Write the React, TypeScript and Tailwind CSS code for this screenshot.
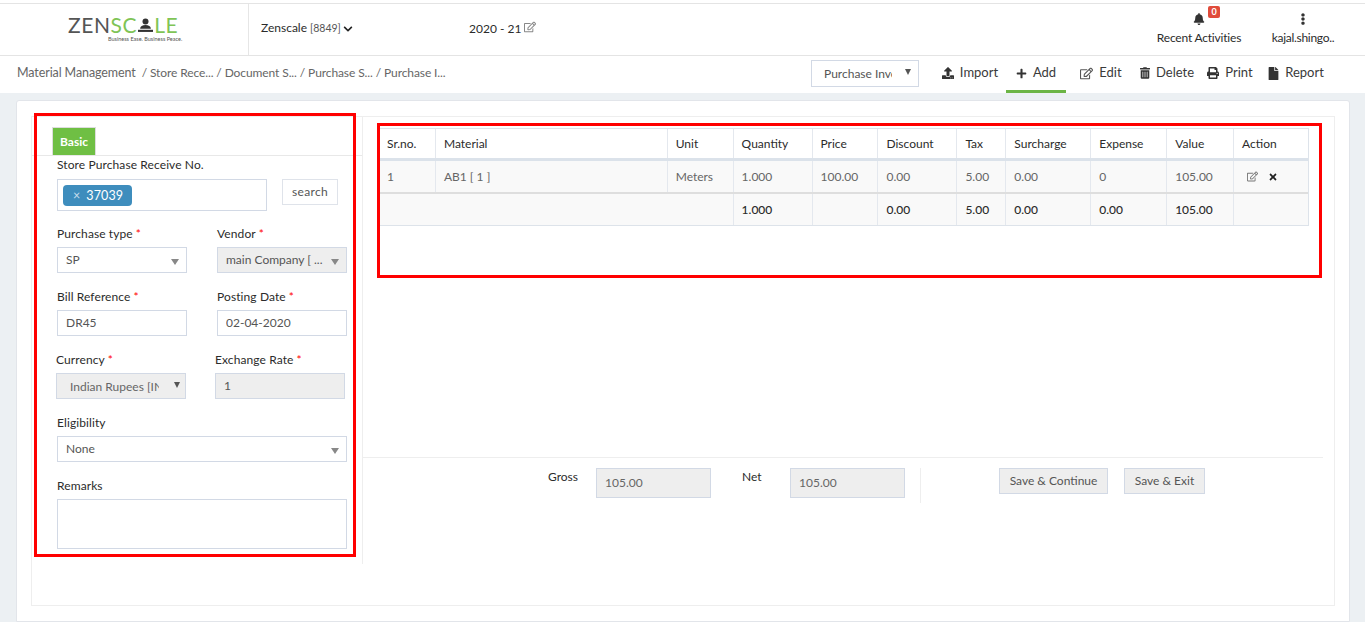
import { FaBell, FaChevronDown, FaEllipsisV, FaFile, FaPlus, FaPrint, FaRegEdit, FaTimes, FaTrashAlt, FaUpload } from "react-icons/fa";
import type { ReactNode } from "react";

const Req = () => <span className="text-[#ff0000] ml-[3px]">*</span>;

const Label = ({ children, req }: { children: ReactNode; req?: boolean }) => (
  <div className="text-[12px] leading-[16px] text-[#2b2b2b] tracking-[0.1px]">
    {children}
    {req && <Req />}
  </div>
);

const Caret = ({ dark }: { dark?: boolean }) => (
  dark
    ? <span className="w-0 h-0 border-x-[3px] border-x-transparent border-t-[6px] border-t-[#555]" />
    : <span className="w-0 h-0 border-x-[4px] border-x-transparent border-t-[6px] border-t-[#888]" />
);

const Field = ({ value, w = "w-[130px]", grey, caret }: { value: string; w?: string; grey?: boolean; caret?: boolean }) => (
  <div className={`${w} h-[26px] mt-[5px] border border-[#d2d9e5] flex items-center pl-[8px] pr-[7px] justify-between text-[12px] text-[#555] ${grey ? "bg-[#eeeeee]" : "bg-white"}`}>
    <span className="truncate">{value}</span>
    {caret && <span className="mt-[3px] flex shrink-0"><Caret /></span>}
  </div>
);

const cols = [
  { name: "Sr.no.", w: "w-[56px]" },
  { name: "Material", w: "w-[232px]" },
  { name: "Unit", w: "w-[66px]" },
  { name: "Quantity", w: "w-[79px]" },
  { name: "Price", w: "w-[66px]" },
  { name: "Discount", w: "w-[79px]" },
  { name: "Tax", w: "w-[49px]" },
  { name: "Surcharge", w: "w-[85px]" },
  { name: "Expense", w: "w-[76px]" },
  { name: "Value", w: "w-[67px]" },
  { name: "Action", w: "w-[74px]" },
];

const row = ["1", "AB1 [ 1 ]", "Meters", "1.000", "100.00", "0.00", "5.00", "0.00", "0", "105.00"];
const totals = ["", "", "", "1.000", "", "0.00", "5.00", "0.00", "0.00", "105.00", ""];

const Tool = ({ icon, label, active, w }: { icon: ReactNode; label: string; active?: boolean; w: string }) => (
  <div className={`${w} h-[37px] flex items-center justify-center gap-[6px] text-[13px] text-[#3a3a3a] border-b-[3px] ${active ? "border-[#6cb545]" : "border-transparent"}`}>
    {icon}
    <span>{label}</span>
  </div>
);

export default function App() {
  return (
    <div className="w-[1365px] h-[622px] overflow-hidden relative bg-white font-['Lato','Liberation_Sans',sans-serif]">
      {/* top bar */}
      <div className="mt-[3px] h-[53px] border-y border-[#e4e4e4] flex relative">
        <div className="w-[249px] border-r border-[#e6e6e6] flex flex-col pt-[11px] pl-[68px]">
          <div className="text-[21px] leading-[20px] tracking-[0.6px] text-[#555] flex items-center">
            ZEN<span className="text-[#7fc456]">SC</span>
            <svg width="15" height="15" viewBox="0 0 14 14" className="mx-[1px]">
              <circle cx="7" cy="3.2" r="2.8" fill="#333" />
              <path d="M2 10c0-2.2 2.2-3.4 5-3.4s5 1.2 5 3.4z" fill="#333" />
              <rect x="0" y="11" width="14" height="2" fill="#333" />
            </svg>
            <span className="text-[#7fc456]">LE</span>
          </div>
          <div className="text-[5.5px] leading-[6px] text-[#555] ml-[40px] mt-[1px] whitespace-nowrap">Business Ease. Business Peace.</div>
        </div>
        <div className="pl-[12px] pt-[15px] w-[220px] flex items-start gap-[3px] text-[12px] leading-[18px] text-[#2b2b2b]">
          Zenscale <span className="text-[10.5px] text-[#555]">[8849]</span>
          <FaChevronDown className="w-[10px] h-[10px] mt-[5px] -ml-[1px] text-[#222]" />
        </div>
        <div className="pt-[16px] flex items-start gap-[3px] text-[12px] leading-[18px] text-[#2b2b2b]">
          2020 - 21 <FaRegEdit className="w-[12px] h-[12px] mt-[1px] text-[#888]" />
        </div>
        <div className="ml-auto flex pr-[24px] text-[12px] text-[#2b2b2b]">
          <div className="w-[110px] flex flex-col items-center pt-[9px] relative">
            <FaBell className="w-[12px] h-[12px] text-[#333]" />
            <span className="absolute left-[64px] top-[2px] w-[12px] h-[12px] bg-[#e04b3a] rounded-[2px] text-white text-[9px] leading-[12px] font-bold text-center">0</span>
            <span className="mt-[5px] leading-[16px] tracking-[-0.2px]">Recent Activities</span>
          </div>
          <div className="ml-[11px] w-[76px] flex flex-col items-center pt-[9px]">
            <FaEllipsisV className="w-[12px] h-[12px] text-[#333]" />
            <span className="mt-[5px] leading-[16px] tracking-[-0.3px]">kajal.shingo..</span>
          </div>
        </div>
      </div>

      {/* breadcrumb and toolbar */}
      <div className="h-[37px] flex items-center pl-[17px]">
        <div className="w-[794px] whitespace-pre text-[12px] text-[#666] -mt-[2px] tracking-[-0.1px]">
          <span className="text-[12.5px]">Material Management</span>  / Store Rece... / Document S... / Purchase S... / Purchase I...
        </div>
        <div className="w-[108px] h-[27px] border border-[#d2d9e5] flex items-center pl-[12px] pr-[7px] text-[12px] text-[#555] -mt-[3px]">
          <span className="w-[68px] overflow-hidden whitespace-nowrap mt-[2px]">Purchase Invoice</span>
          <span className="ml-auto mb-[2px] flex"><Caret dark /></span>
        </div>
        <div className="ml-[15px] flex items-center">
          <Tool w="w-[72px]" label="Import" icon={<FaUpload className="w-[12px] h-[12px] text-[#333]" />} />
          <Tool w="w-[60px]" active label="Add" icon={<FaPlus className="w-[11px] h-[11px] text-[#333]" />} />
          <Tool w="w-[70px]" label="Edit" icon={<FaRegEdit className="w-[13px] h-[13px] text-[#555]" />} />
          <Tool w="w-[62px]" label="Delete" icon={<FaTrashAlt className="w-[10px] h-[12px] text-[#333]" />} />
          <Tool w="w-[64px]" label="Print" icon={<FaPrint className="w-[12px] h-[12px] text-[#333]" />} />
          <Tool w="w-[68px]" label="Report" icon={<FaFile className="w-[11px] h-[13px] text-[#333]" />} />
        </div>
      </div>

      {/* page body */}
      <div className="h-[529px] bg-[#ecf0f3] pt-[7px] px-[16px]">
        <div className="w-[1334px] h-[522px] bg-white border border-[#e2e5ea] rounded-t-[3px] pt-[15px] px-[14px]">
          <div className="h-[490px] border border-[#eeeeee] flex">
            {/* left form */}
            <div className="w-[331px] h-[447px] border-r border-[#eeeeee] pt-[10px] shrink-0">
              <div className="h-[29px] border-b border-[#e8e8e8] pl-[20px]">
                <div className="w-[44px] h-[28px] bg-[#6fbf44] border border-[#ddd] border-b-0 text-white text-[12px] font-bold leading-[28px] text-center">Basic</div>
              </div>
              <div className="pl-[25px] pt-[1px]">
                <Label>Store Purchase Receive No.</Label>
                <div className="flex mt-[6px] items-start">
                  <div className="w-[210px] h-[32px] border border-[#d2d9e5] pl-[5px] flex items-center">
                    <span className="w-[69px] h-[21px] bg-[#3e8dbd] rounded-[4px] text-white text-[12.5px] leading-[21px] pl-[10px] tracking-[0.1px]"><span className="text-[#c9dfee] mr-[6px]">×</span>37039</span>
                  </div>
                  <div className="ml-[15px] w-[56px] h-[26px] border border-[#dfe3ea] text-[12px] text-[#555] text-center leading-[24px] tracking-[0.3px]">search</div>
                </div>
                <div className="grid grid-cols-[130px_130px] gap-x-[30px] mt-[15px] gap-y-[16px]">
                  <div><Label>Purchase type<Req /></Label><Field value="SP" caret /></div>
                  <div><Label>Vendor<Req /></Label><Field value="main Company [ ..." grey caret /></div>
                  <div><Label>Bill Reference<Req /></Label><Field value="DR45" /></div>
                  <div><Label>Posting Date<Req /></Label><Field value="02-04-2020" /></div>
                  <div className="-ml-[1px]">
                    <Label>Currency<Req /></Label>
                    <div className="w-[130px] h-[26px] mt-[5px] border border-[#d2d9e5] bg-[#eeeeee] flex items-center pl-[13px] pr-[5px] text-[12px] text-[#666]">
                      <span className="w-[89px] overflow-hidden whitespace-nowrap mt-[2px]">Indian Rupees [INR]</span>
                      <span className="ml-auto mb-[3px] flex"><Caret dark /></span>
                    </div>
                  </div>
                  <div className="-ml-[2px]"><Label>Exchange Rate<Req /></Label><Field value="1" grey /></div>
                </div>
                <div className="mt-[16px]"><Label>Eligibility</Label><Field value="None" w="w-[290px]" caret /></div>
                <div className="mt-[16px]">
                  <Label>Remarks</Label>
                  <div className="w-[290px] h-[50px] mt-[5px] border border-[#d2d9e5]" />
                </div>
              </div>
            </div>

            {/* right side */}
            <div className="flex-1 flex flex-col">
              <div className="h-[341px] border-b border-[#eeeeee] pl-[17px] pt-[11px] mr-[11px]">
                <div className="w-[929px] border border-[#dde3ea] border-l-0 text-[12px]">
                  <div className="flex h-[32px] border-b-[3px] border-[#dbe2ea] text-[#2b2b2b]">
                    {cols.map((c, i) => (
                      <div key={c.name} className={`${c.w} ${i === 0 ? "pl-[7px]" : "pl-[8px]"} leading-[30px] border-r border-[#e4e8ee] last:border-r-0`}>{c.name}</div>
                    ))}
                  </div>
                  <div className="flex h-[33px] border-b-2 border-[#dedede] bg-[#f9f9f9] text-[#666]">
                    {cols.map((c, i) => (
                      <div key={c.name} className={`${c.w} ${i === 0 ? "pl-[7px]" : "pl-[8px]"} leading-[31px] border-r border-[#e4e8ee] last:border-r-0`}>
                        {i < 10 ? row[i] : (
                          <span className="flex items-center h-full gap-[10px] pl-[5px]">
                            <FaRegEdit className="w-[11px] h-[11px] text-[#777]" />
                            <FaTimes className="w-[10px] h-[10px] text-[#222]" />
                          </span>
                        )}
                      </div>
                    ))}
                  </div>
                  <div className="flex h-[31px] bg-[#f9f9f9] text-[#2b2b2b] font-medium">
                    <div className="w-[354px] border-r border-[#e4e8ee]" />
                    {cols.slice(3).map((c, i) => (
                      <div key={c.name} className={`${c.w} pl-[8px] leading-[31px] border-r border-[#e4e8ee] last:border-r-0`}>{totals[i + 3]}</div>
                    ))}
                  </div>
                </div>
              </div>
              <div className="flex pt-[10px] text-[12px] text-[#2b2b2b]">
                <div className="ml-[185px] mt-[1px] w-[48px] leading-[16px]">Gross</div>
                <div className="w-[115px] h-[30px] border border-[#d2d9e5] bg-[#eeeeee] pl-[8px] leading-[28px] text-[#666]">105.00</div>
                <div className="ml-[31px] mt-[1px] w-[48px] leading-[16px]">Net</div>
                <div className="w-[115px] h-[30px] border border-[#d2d9e5] bg-[#eeeeee] pl-[8px] leading-[28px] text-[#666]">105.00</div>
                <div className="ml-[15px] h-[35px] border-l border-[#eeeeee]" />
                <div className="ml-[78px] w-[109px] h-[26px] border border-[#d2d9e5] bg-[#eeeeee] text-center leading-[24px] text-[#555]">Save &amp; Continue</div>
                <div className="ml-[16px] w-[81px] h-[26px] border border-[#d2d9e5] bg-[#eeeeee] text-center leading-[24px] text-[#555]">Save &amp; Exit</div>
              </div>
            </div>
          </div>
        </div>
      </div>

      {/* highlight boxes drawn over the page */}
      <div className="absolute left-[34px] top-[113px] w-[322px] h-[444px] border-[3px] border-[#ff0000]" />
      <div className="absolute left-[377px] top-[123px] w-[945px] h-[155px] border-[3px] border-[#ff0000]" />
    </div>
  );
}
